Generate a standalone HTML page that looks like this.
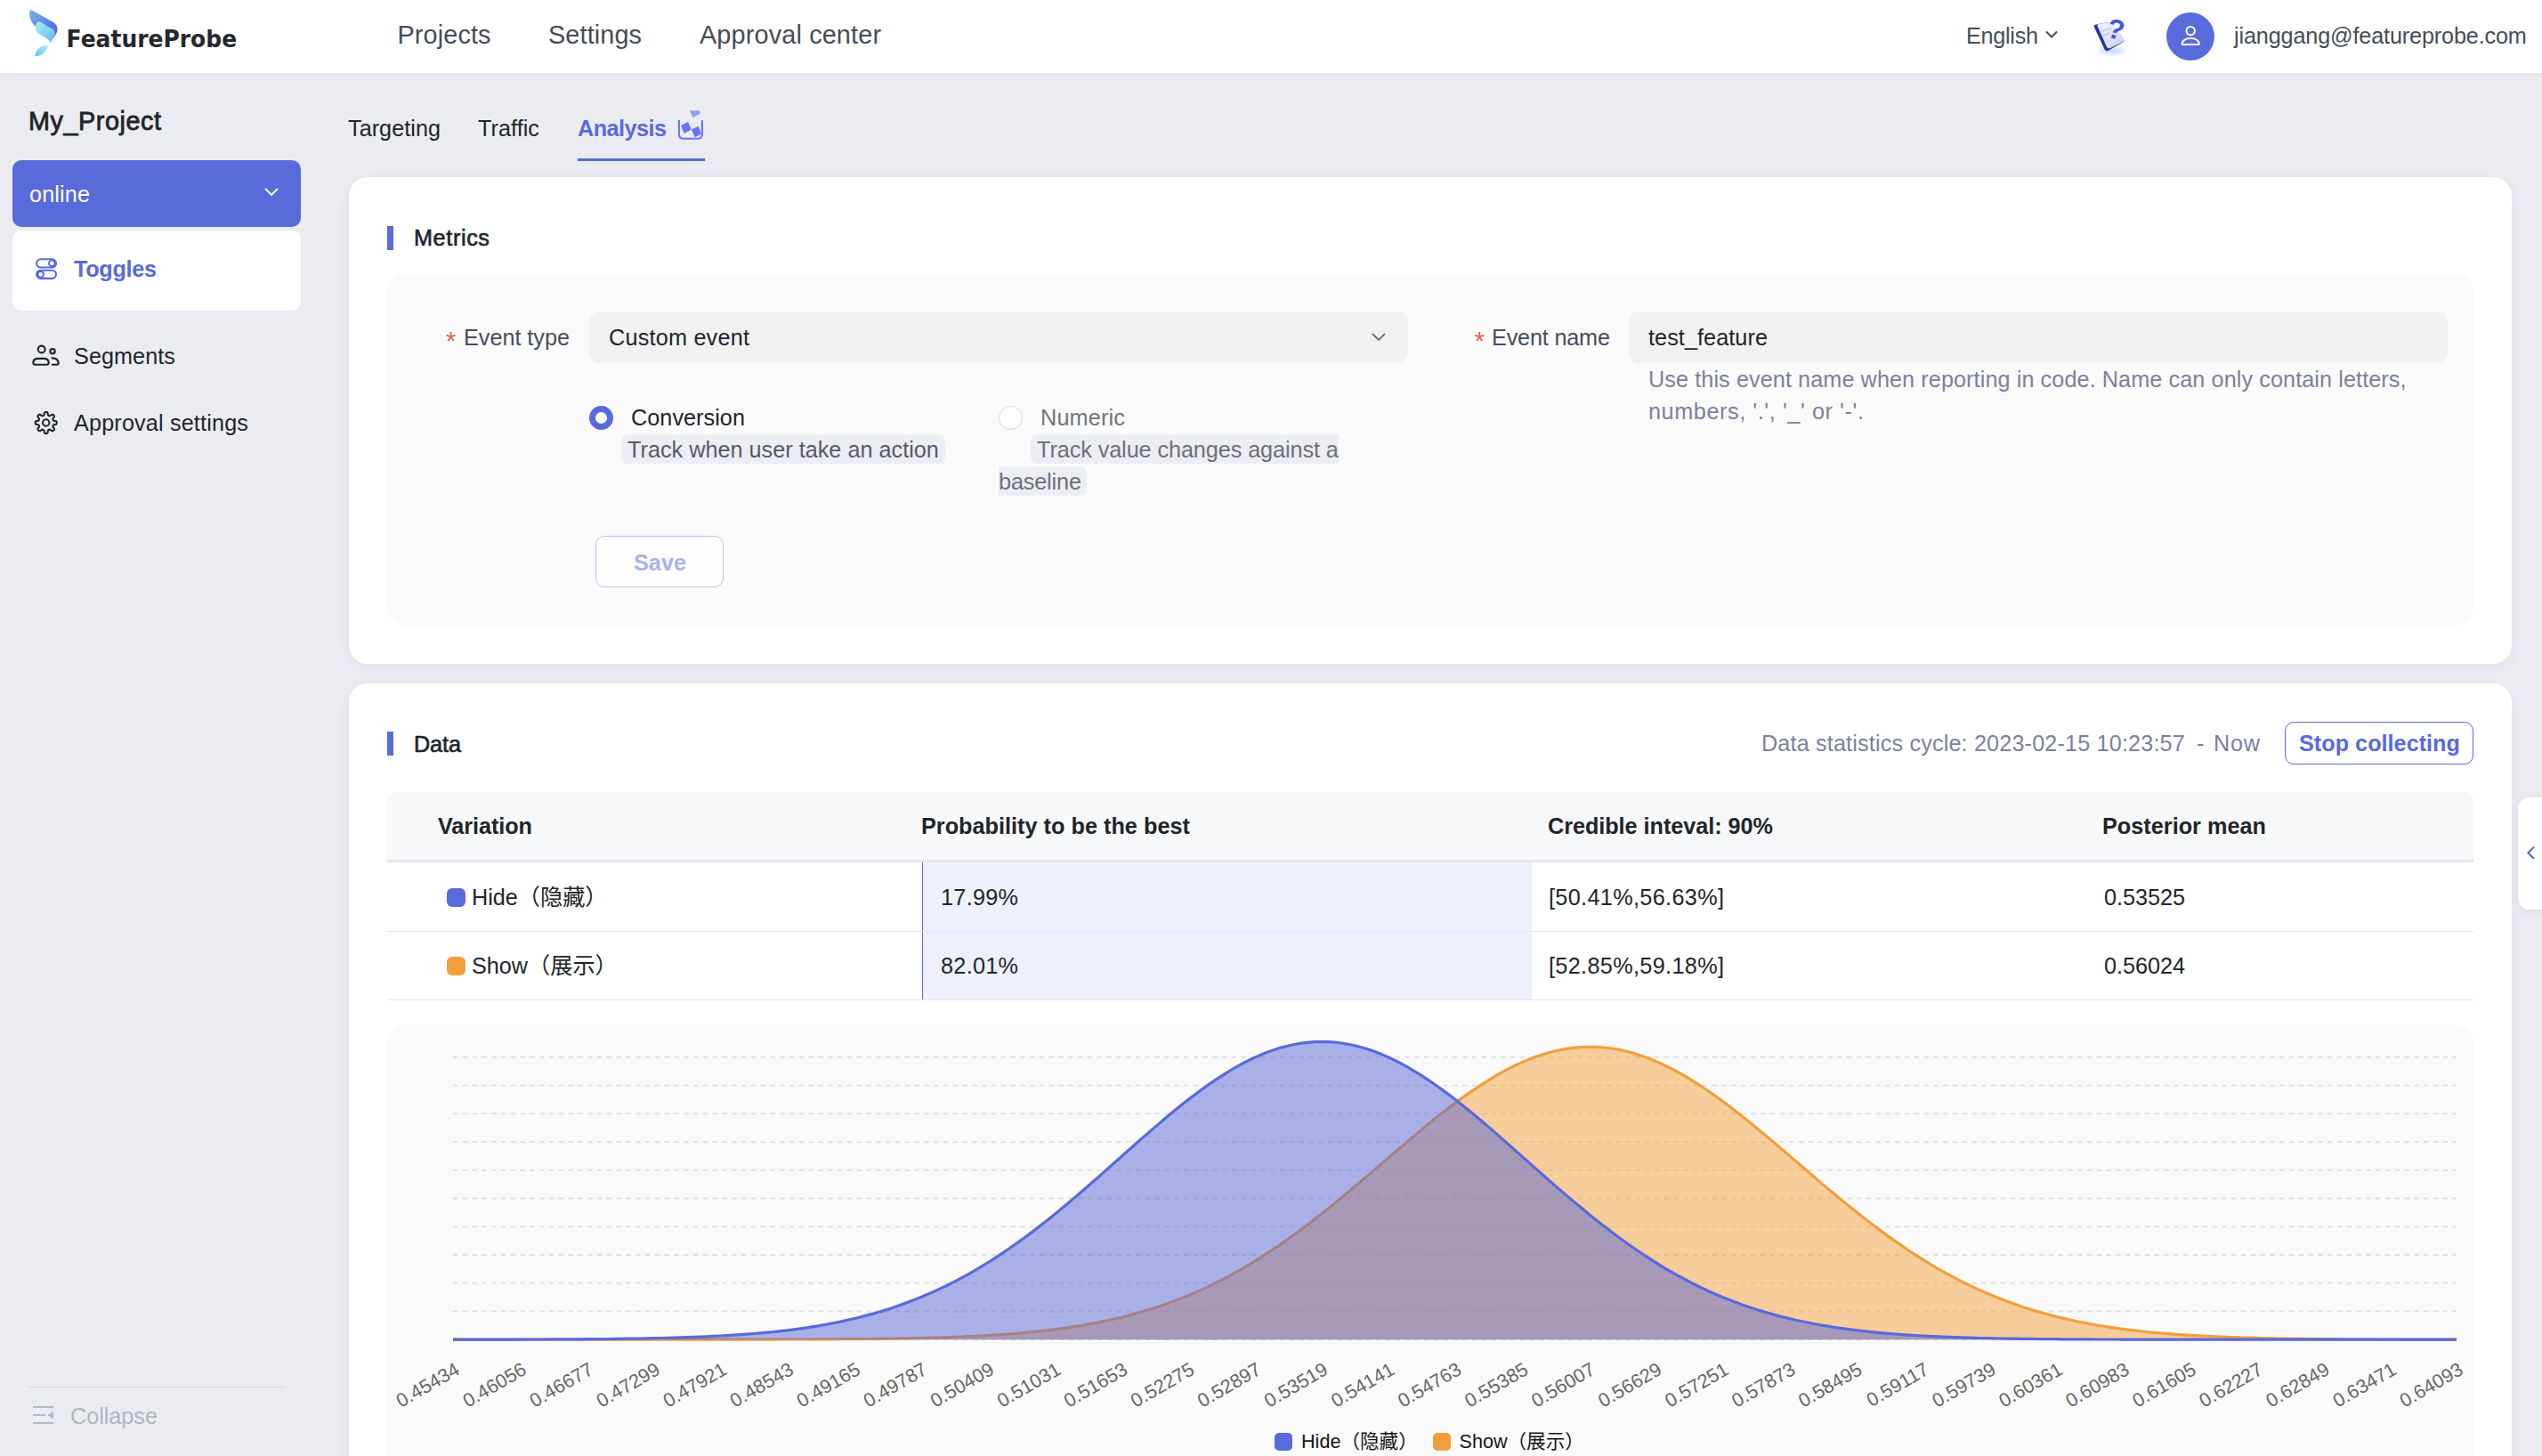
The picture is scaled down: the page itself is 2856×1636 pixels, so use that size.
<!DOCTYPE html>
<html lang="en"><head><meta charset="utf-8"><title>FeatureProbe - Analysis</title>
<style>
html,body{margin:0;padding:0;}
body{width:2856px;height:1636px;overflow:hidden;position:relative;background:#ebecf2;
font-family:"Liberation Sans","Noto Sans CJK SC",sans-serif;-webkit-font-smoothing:antialiased;}
.t{position:absolute;white-space:nowrap;margin:0;}
.b{position:absolute;box-sizing:border-box;}
</style></head><body>
<div class="b" style="left:0px;top:0px;width:2856px;height:82px;background:#fff;border-radius:0px;box-shadow:0 2px 6px rgba(60,70,120,0.04);"></div>
<svg class="b" style="left:30px;top:8px;" width="40" height="58" viewBox="0 0 40 58">
<defs>
<linearGradient id="lg1" x1="0" y1="0" x2="1" y2="1"><stop offset="0" stop-color="#7ab6ee"/><stop offset="1" stop-color="#4b56e0"/></linearGradient>
<linearGradient id="lg2" x1="0" y1="0" x2="1" y2="1"><stop offset="0" stop-color="#a8f0ee"/><stop offset="1" stop-color="#5fb6f5"/></linearGradient>
<linearGradient id="lg3" x1="0" y1="1" x2="1" y2="0"><stop offset="0" stop-color="#5cc4f8"/><stop offset="1" stop-color="#b4ecf6"/></linearGradient>
</defs>
<path d="M3 6 Q3 2 7 4 L30 17 Q36 21 34 28 L31 34 Q22 26 10 22 Q3 16 3 6Z" fill="url(#lg1)"/>
<path d="M11 18 Q13 15 16 17 L30 25 Q33 28 31 33 L27 40 Q24 35 17 32 Q9 28 10 22Z" fill="url(#lg2)"/>
<path d="M9 55 Q11 46 19 43 Q23 42 24 44 Q21 52 15 54 Q11 56 9 55Z" fill="url(#lg3)"/>
</svg>
<svg class="b" style="left:72px;top:26px;" width="200" height="34" viewBox="0 0 200 34"><text x="2.6" y="26.5" font-family="DejaVu Sans, Liberation Sans, sans-serif" font-weight="700" font-size="27.4" fill="#26282d" textLength="191.5" lengthAdjust="spacingAndGlyphs">FeatureProbe</text></svg>
<div class="t " style="left:446.5px;top:18px;line-height:43px;font-size:28.8px;color:#464c56;letter-spacing:0.138px;">Projects</div>
<div class="t " style="left:616px;top:18px;line-height:43px;font-size:28.8px;color:#464c56;letter-spacing:0.134px;">Settings</div>
<div class="t " style="left:786px;top:18px;line-height:43px;font-size:28.8px;color:#464c56;letter-spacing:0.164px;">Approval center</div>
<div class="t " style="left:2209px;top:20.5px;line-height:38px;font-size:25.2px;color:#464c56;letter-spacing:-0.275px;">English</div>
<svg class="b" style="left:2297px;top:33px;" width="16" height="12" viewBox="0 0 16 12"><path d="M2 2.5 L8 8.5 L14 2.5" fill="none" stroke="#474d5a" stroke-width="2"/></svg>
<svg class="b" style="left:2346px;top:18px;" width="48" height="46" viewBox="0 0 48 46">
<defs><linearGradient id="hg" x1="0" y1="0" x2="1" y2="1"><stop offset="0" stop-color="#f4f5fe"/><stop offset="1" stop-color="#c9cff6"/></linearGradient>
<filter id="hb" x="-30%" y="-30%" width="160%" height="160%"><feGaussianBlur stdDeviation="2"/></filter></defs>
<ellipse cx="26" cy="39" rx="15" ry="4" fill="#b9d0fa" opacity="0.7" filter="url(#hb)"/>
<path d="M6.5 11.5 Q7 9.5 9 9.5 L22 7 Q25 6.5 26.5 9 L40 26 Q41.5 28 39 29.5 L22.5 39 Q20 40 18.5 37.5 Z" fill="#2a35a8"/>
<path d="M10.5 11 Q10 9.3 12 9 L23 7 Q25.5 6.6 27 8.8 L40 25.5 Q41.5 27.8 39 29 L25 36 Q22.5 37 21 34.8 Z" fill="url(#hg)"/>
<path d="M14.5 17 L25 14.2 M17 22 L23.5 20.2" stroke="#c5ccf5" stroke-width="1.8" stroke-linecap="round"/>
<text transform="translate(19.4 23) rotate(14)" font-family="Liberation Sans, sans-serif" font-weight="700" font-size="31" fill="#3f57e0">?</text>
</svg>
<div class="b" style="left:2434px;top:14px;width:54px;height:54px;background:#596adb;border-radius:27px;"></div>
<svg class="b" style="left:2447px;top:26px;" width="28" height="28" viewBox="0 0 28 28"><circle cx="14.2" cy="8.6" r="4.7" fill="none" stroke="#fff" stroke-width="2"/><path d="M5 24 Q4.4 24 4.6 22.8 Q6 17 14.2 17 Q22.4 17 23.8 22.8 Q24 24 23.4 24 Z" fill="none" stroke="#fff" stroke-width="2" stroke-linejoin="round"/></svg>
<div class="t " style="left:2510px;top:20.5px;line-height:38px;font-size:25.2px;color:#464c56;letter-spacing:-0.136px;">jianggang@featureprobe.com</div>
<div class="t " style="left:32px;top:114.5px;line-height:43px;font-size:28.8px;color:#212529;letter-spacing:0.551px;-webkit-text-stroke:0.8px #212529;">My_Project</div>
<div class="b" style="left:14px;top:180px;width:324px;height:75px;background:#596adb;border-radius:10px;"></div>
<div class="t " style="left:33px;top:199px;line-height:38px;font-size:25.2px;color:#fff;letter-spacing:0.149px;">online</div>
<svg class="b" style="left:296px;top:209px;" width="18" height="14" viewBox="0 0 18 14"><path d="M2 3 L9 10 L16 3" fill="none" stroke="#fff" stroke-width="1.9"/></svg>
<div class="b" style="left:14px;top:259px;width:324px;height:90px;background:#fff;border-radius:10px;"></div>
<svg class="b" style="left:38px;top:288px;" width="28" height="28" viewBox="0 0 28 28"><g fill="none" stroke="#596adb" stroke-width="2.1">
<rect x="3.1" y="3.3" width="21.9" height="9.2" rx="4.6"/><rect x="3.1" y="15.7" width="21.9" height="9.2" rx="4.6"/>
<circle cx="20.3" cy="7.9" r="3.3" stroke-width="1.9"/><circle cx="7.7" cy="20.3" r="3.3" stroke-width="1.9"/></g></svg>
<div class="t " style="left:83px;top:283px;line-height:38px;font-size:25.2px;color:#596adb;font-weight:700;letter-spacing:-0.288px;">Toggles</div>
<svg class="b" style="left:35px;top:385px;" width="34" height="30" viewBox="0 0 34 30"><g fill="none" stroke="#212529" stroke-width="2.1" stroke-linecap="round" stroke-linejoin="round">
<circle cx="11.7" cy="7.5" r="3.9"/><path d="M2.3 22.5 Q2.3 17.9 8 17.9 H14 Q19.7 17.9 19.7 22.5 Q19.7 24.7 17.5 24.7 H4.5 Q2.3 24.7 2.3 22.5 Z"/>
<circle cx="24" cy="9.7" r="2.7"/><path d="M23.5 17.4 Q30.5 17.6 30.7 22.8 Q30.7 24.7 28.8 24.7 H23.8"/></g></svg>
<div class="t " style="left:83px;top:381px;line-height:38px;font-size:25.2px;color:#212529;letter-spacing:0.077px;">Segments</div>
<svg class="b" style="left:36px;top:461px;" width="32" height="30" viewBox="0 0 32 30"><g fill="none" stroke="#212529" stroke-width="2.1" stroke-linejoin="round">
<path d="M15.70 1.95 L16.17 1.97 L16.64 2.04 L17.09 2.24 L17.48 2.78 L17.71 3.90 L17.86 5.02 L18.08 5.57 L18.36 5.82 L18.66 5.97 L18.97 6.10 L19.28 6.23 L19.61 6.33 L19.98 6.36 L20.53 6.12 L21.42 5.44 L22.38 4.81 L23.03 4.70 L23.49 4.88 L23.87 5.16 L24.22 5.48 L24.54 5.83 L24.82 6.21 L25.00 6.67 L24.89 7.32 L24.26 8.28 L23.58 9.17 L23.34 9.72 L23.37 10.09 L23.47 10.42 L23.60 10.73 L23.73 11.04 L23.88 11.34 L24.13 11.62 L24.68 11.84 L25.80 11.99 L26.92 12.22 L27.46 12.61 L27.66 13.06 L27.73 13.53 L27.75 14.00 L27.73 14.47 L27.66 14.94 L27.46 15.39 L26.92 15.78 L25.80 16.01 L24.68 16.16 L24.13 16.38 L23.88 16.66 L23.73 16.96 L23.60 17.27 L23.47 17.58 L23.37 17.91 L23.34 18.28 L23.58 18.83 L24.26 19.72 L24.89 20.68 L25.00 21.33 L24.82 21.79 L24.54 22.17 L24.22 22.52 L23.87 22.84 L23.49 23.12 L23.03 23.30 L22.38 23.19 L21.42 22.56 L20.53 21.88 L19.98 21.64 L19.61 21.67 L19.28 21.77 L18.97 21.90 L18.66 22.03 L18.36 22.18 L18.08 22.43 L17.86 22.98 L17.71 24.10 L17.48 25.22 L17.09 25.76 L16.64 25.96 L16.17 26.03 L15.70 26.05 L15.23 26.03 L14.76 25.96 L14.31 25.76 L13.92 25.22 L13.69 24.10 L13.54 22.98 L13.32 22.43 L13.04 22.18 L12.74 22.03 L12.43 21.90 L12.12 21.77 L11.79 21.67 L11.42 21.64 L10.87 21.88 L9.98 22.56 L9.02 23.19 L8.37 23.30 L7.91 23.12 L7.53 22.84 L7.18 22.52 L6.86 22.17 L6.58 21.79 L6.40 21.33 L6.51 20.68 L7.14 19.72 L7.82 18.83 L8.06 18.28 L8.03 17.91 L7.93 17.58 L7.80 17.27 L7.67 16.96 L7.52 16.66 L7.27 16.38 L6.72 16.16 L5.60 16.01 L4.48 15.78 L3.94 15.39 L3.74 14.94 L3.67 14.47 L3.65 14.00 L3.67 13.53 L3.74 13.06 L3.94 12.61 L4.48 12.22 L5.60 11.99 L6.72 11.84 L7.27 11.62 L7.52 11.34 L7.67 11.04 L7.80 10.73 L7.93 10.42 L8.03 10.09 L8.06 9.72 L7.82 9.17 L7.14 8.28 L6.51 7.32 L6.40 6.67 L6.58 6.21 L6.86 5.83 L7.18 5.48 L7.53 5.16 L7.91 4.88 L8.37 4.70 L9.02 4.81 L9.98 5.44 L10.87 6.12 L11.42 6.36 L11.79 6.33 L12.12 6.23 L12.43 6.10 L12.74 5.97 L13.04 5.82 L13.32 5.57 L13.54 5.02 L13.69 3.90 L13.92 2.78 L14.31 2.24 L14.76 2.04 L15.23 1.97 Z"/>
<circle cx="15.7" cy="14" r="3.7"/></g></svg>
<div class="t " style="left:83px;top:456px;line-height:38px;font-size:25.2px;color:#212529;letter-spacing:0.168px;">Approval settings</div>
<div class="b" style="left:32px;top:1558px;width:288px;height:1px;background:#d5d8df;border-radius:0px;"></div>
<svg class="b" style="left:36px;top:1578px;" width="26" height="24" viewBox="0 0 26 24"><g fill="none" stroke="#b3babf" stroke-width="2.2"><path d="M1 3 H24 M1 12 H15 M1 21 H24"/></g><path d="M24 7.5 V16.5 L17.5 12 Z" fill="#b3babf"/></svg>
<div class="t " style="left:79px;top:1572px;line-height:38px;font-size:25.2px;color:#afb7bb;letter-spacing:-0.008px;">Collapse</div>
<div class="t " style="left:391px;top:125px;line-height:38px;font-size:25.2px;color:#212529;letter-spacing:0.041px;">Targeting</div>
<div class="t " style="left:537px;top:125px;line-height:38px;font-size:25.2px;color:#212529;letter-spacing:0.065px;">Traffic</div>
<div class="t " style="left:649px;top:125px;line-height:38px;font-size:25.2px;color:#596adb;font-weight:700;letter-spacing:-0.522px;">Analysis</div>
<svg class="b" style="left:760px;top:122px;" width="34" height="36" viewBox="0 0 34 36"><path d="M2.9 13 V28.7 Q2.9 33.7 7.9 33.7 H23.9 Q28.9 33.7 28.9 28.7 V13" fill="none" stroke="#6a73f5" stroke-width="2.1"/>
<path d="M14.9 2.2 L25.6 2.2 L27 5.5 L18.5 9.9 Z" fill="#8f99f8"/>
<path d="M5.1 18.9 L13 15 L16.9 23.6 L8.6 28 Z" fill="#6a73f5"/>
<path d="M16.9 23.6 L24.8 19.7 L27.9 28.4 L20.8 32.3 Z" fill="#6a73f5"/></svg>
<div class="b" style="left:649px;top:178px;width:143px;height:3px;background:#596adb;border-radius:0px;"></div>
<div class="b" style="left:392px;top:199px;width:2430px;height:547px;background:#fff;border-radius:21px;box-shadow:0 4px 16px rgba(60,70,120,0.06);"></div>
<div class="b" style="left:435px;top:254px;width:7px;height:27px;background:#596adb;border-radius:0px;"></div>
<div class="t " style="left:465px;top:248px;line-height:38px;font-size:25.2px;color:#212529;letter-spacing:0.633px;-webkit-text-stroke:0.65px #212529;">Metrics</div>
<div class="b" style="left:435px;top:307px;width:2344px;height:396px;background:#fafafa;border-radius:21px;"></div>
<div class="t " style="left:501px;top:361px;line-height:44px;font-size:29px;color:#e9604f;">*</div>
<div class="t " style="left:521px;top:360px;line-height:38px;font-size:25.2px;color:#474d5a;letter-spacing:-0.008px;">Event type</div>
<div class="b" style="left:662px;top:350px;width:920px;height:58px;background:#f1f1f2;border-radius:12px;"></div>
<div class="t " style="left:684px;top:360px;line-height:38px;font-size:25.2px;color:#212529;letter-spacing:0.230px;">Custom event</div>
<svg class="b" style="left:1539px;top:371px;" width="20" height="16" viewBox="0 0 20 16"><path d="M3 4 L10 11 L17 4" fill="none" stroke="#666c82" stroke-width="1.8"/></svg>
<div class="b" style="left:662px;top:456px;width:27px;height:27px;background:#fff;border-radius:14px;border:7.6px solid #596adb;"></div>
<div class="t " style="left:709px;top:450px;line-height:38px;font-size:25.2px;color:#212529;letter-spacing:0.059px;">Conversion</div>
<div class="b" style="left:698px;top:488px;width:364px;height:33px;background:#ededf4;border-radius:7px;"></div>
<div class="t " style="left:705px;top:486px;line-height:38px;font-size:25.2px;color:#555a66;letter-spacing:0.026px;">Track when user take an action</div>
<div class="b" style="left:1122px;top:456px;width:27px;height:27px;background:#fff;border-radius:14px;border:1px solid #d4d7de;"></div>
<div class="t " style="left:1169px;top:450px;line-height:38px;font-size:25.2px;color:#70757b;letter-spacing:0.198px;">Numeric</div>
<div class="b" style="left:1158px;top:488px;width:346px;height:33px;background:#ededf4;border-radius:7px 0 0 7px;"></div>
<div class="t " style="left:1165px;top:486px;line-height:38px;font-size:25.2px;color:#6c7178;letter-spacing:-0.067px;">Track value changes against a</div>
<div class="b" style="left:1122px;top:524px;width:99px;height:33px;background:#ededf4;border-radius:0 7px 7px 0;"></div>
<div class="t " style="left:1122px;top:522px;line-height:38px;font-size:25.2px;color:#6c7178;letter-spacing:-0.125px;">baseline</div>
<div class="b" style="left:669px;top:602px;width:144px;height:58px;background:#fdfdfd;border-radius:10px;border:1.5px solid #b8bff0;"></div>
<div class="t " style="left:712px;top:612.5px;line-height:38px;font-size:25.2px;color:#a9b1ec;font-weight:700;letter-spacing:0.049px;">Save</div>
<div class="t " style="left:1656.5px;top:361px;line-height:44px;font-size:29px;color:#e9604f;">*</div>
<div class="t " style="left:1676px;top:360px;line-height:38px;font-size:25.2px;color:#474d5a;letter-spacing:-0.164px;">Event name</div>
<div class="b" style="left:1830px;top:350px;width:920px;height:58px;background:#f1f1f2;border-radius:12px;"></div>
<div class="t " style="left:1852px;top:360px;line-height:38px;font-size:25.2px;color:#212529;letter-spacing:0.083px;">test_feature</div>
<div class="t " style="left:1852px;top:407px;line-height:38px;font-size:25.2px;color:#7c8199;letter-spacing:0.100px;">Use this event name when reporting in code. Name can only contain letters,</div>
<div class="t " style="left:1852px;top:443px;line-height:38px;font-size:25.2px;color:#7c8199;letter-spacing:0.594px;">numbers, '.', '_' or '-'.</div>
<div class="b" style="left:392px;top:768px;width:2430px;height:932px;background:#fff;border-radius:21px;box-shadow:0 4px 16px rgba(60,70,120,0.06);"></div>
<div class="b" style="left:435px;top:822px;width:7px;height:27px;background:#596adb;border-radius:0px;"></div>
<div class="t " style="left:465px;top:817px;line-height:38px;font-size:25.2px;color:#212529;letter-spacing:-0.077px;-webkit-text-stroke:0.65px #212529;">Data</div>
<div class="t " style="left:1979px;top:816px;line-height:38px;font-size:25.2px;color:#7c8199;letter-spacing:0.164px;">Data statistics cycle: 2023-02-15 10:23:57</div>
<div class="t " style="left:2468px;top:816px;line-height:38px;font-size:25.2px;color:#7c8199;">-</div>
<div class="t " style="left:2487px;top:816px;line-height:38px;font-size:25.2px;color:#7c8199;letter-spacing:0.794px;">Now</div>
<div class="b" style="left:2567px;top:811px;width:212px;height:48px;background:#fff;border-radius:10px;border:1.5px solid #596adb;"></div>
<div class="t " style="left:2583px;top:816px;line-height:38px;font-size:25.2px;color:#596adb;font-weight:700;letter-spacing:0.028px;">Stop collecting</div>
<div class="b" style="left:435px;top:890px;width:2344px;height:76px;background:#f7f8fa;border-radius:10px 10px 0 0;"></div>
<div class="b" style="left:435px;top:966px;width:2344px;height:3px;background:#e4e6ea;border-radius:0px;"></div>
<div class="t " style="left:492px;top:909px;line-height:38px;font-size:25.2px;color:#212529;font-weight:700;letter-spacing:-0.054px;">Variation</div>
<div class="t " style="left:1035px;top:909px;line-height:38px;font-size:25.2px;color:#212529;font-weight:700;letter-spacing:0.039px;">Probability to be the best</div>
<div class="t " style="left:1739px;top:909px;line-height:38px;font-size:25.2px;color:#212529;font-weight:700;letter-spacing:-0.025px;">Credible inteval: 90%</div>
<div class="t " style="left:2362px;top:909px;line-height:38px;font-size:25.2px;color:#212529;font-weight:700;letter-spacing:0.041px;">Posterior mean</div>
<div class="b" style="left:1036px;top:969px;width:685px;height:154px;background:#eef0fd;border-radius:0px;border-left:1.5px solid #596adb;"></div>
<div class="b" style="left:435px;top:1046px;width:2344px;height:1px;background:#e5e6ea;border-radius:0px;"></div>
<div class="b" style="left:435px;top:1123px;width:2344px;height:1px;background:#e5e6ea;border-radius:0px;"></div>
<div class="b" style="left:502px;top:997.5px;width:21px;height:21.5px;background:#596adb;border-radius:6px;"></div>
<div class="t " style="left:530px;top:989px;line-height:38px;font-size:25.2px;color:#212529;">Hide（隐藏）</div>
<div class="t " style="left:1057px;top:989px;line-height:38px;font-size:25.2px;color:#212529;letter-spacing:0.306px;">17.99%</div>
<div class="t " style="left:1740px;top:989px;line-height:38px;font-size:25.2px;color:#212529;letter-spacing:0.361px;">[50.41%,56.63%]</div>
<div class="t " style="left:2364px;top:989px;line-height:38px;font-size:25.2px;color:#212529;letter-spacing:-0.015px;">0.53525</div>
<div class="b" style="left:502px;top:1074.5px;width:21px;height:21.5px;background:#f19f3c;border-radius:6px;"></div>
<div class="t " style="left:530px;top:1066px;line-height:38px;font-size:25.2px;color:#212529;">Show（展示）</div>
<div class="t " style="left:1057px;top:1066px;line-height:38px;font-size:25.2px;color:#212529;letter-spacing:0.306px;">82.01%</div>
<div class="t " style="left:1740px;top:1066px;line-height:38px;font-size:25.2px;color:#212529;letter-spacing:0.361px;">[52.85%,59.18%]</div>
<div class="t " style="left:2364px;top:1066px;line-height:38px;font-size:25.2px;color:#212529;letter-spacing:-0.015px;">0.56024</div>
<div class="b" style="left:435px;top:1151px;width:2344px;height:549px;background:#fafafa;border-radius:21px;"></div>
<svg class="b" style="left:0;top:0" width="2856" height="1636" viewBox="0 0 2856 1636" font-family="Liberation Sans, sans-serif"><line x1="509" y1="1505.2" x2="2760" y2="1505.2" stroke="#dfdfdf" stroke-width="1.8" stroke-dasharray="5.4 5.4"/><line x1="509" y1="1473.5" x2="2760" y2="1473.5" stroke="#dfdfdf" stroke-width="1.8" stroke-dasharray="5.4 5.4"/><line x1="509" y1="1441.7" x2="2760" y2="1441.7" stroke="#dfdfdf" stroke-width="1.8" stroke-dasharray="5.4 5.4"/><line x1="509" y1="1410.0" x2="2760" y2="1410.0" stroke="#dfdfdf" stroke-width="1.8" stroke-dasharray="5.4 5.4"/><line x1="509" y1="1378.3" x2="2760" y2="1378.3" stroke="#dfdfdf" stroke-width="1.8" stroke-dasharray="5.4 5.4"/><line x1="509" y1="1346.5" x2="2760" y2="1346.5" stroke="#dfdfdf" stroke-width="1.8" stroke-dasharray="5.4 5.4"/><line x1="509" y1="1314.8" x2="2760" y2="1314.8" stroke="#dfdfdf" stroke-width="1.8" stroke-dasharray="5.4 5.4"/><line x1="509" y1="1283.1" x2="2760" y2="1283.1" stroke="#dfdfdf" stroke-width="1.8" stroke-dasharray="5.4 5.4"/><line x1="509" y1="1251.4" x2="2760" y2="1251.4" stroke="#dfdfdf" stroke-width="1.8" stroke-dasharray="5.4 5.4"/><line x1="509" y1="1219.6" x2="2760" y2="1219.6" stroke="#dfdfdf" stroke-width="1.8" stroke-dasharray="5.4 5.4"/><line x1="509" y1="1187.9" x2="2760" y2="1187.9" stroke="#dfdfdf" stroke-width="1.8" stroke-dasharray="5.4 5.4"/><path d="M509.0 1505.2 L516.5 1505.2 L524.0 1505.2 L531.5 1505.2 L539.0 1505.2 L546.5 1505.2 L554.0 1505.2 L561.5 1505.2 L569.0 1505.2 L576.5 1505.2 L584.0 1505.2 L591.5 1505.2 L599.0 1505.2 L606.5 1505.2 L614.0 1505.2 L621.5 1505.2 L629.1 1505.2 L636.6 1505.2 L644.1 1505.2 L651.6 1505.2 L659.1 1505.2 L666.6 1505.2 L674.1 1505.2 L681.6 1505.2 L689.1 1505.2 L696.6 1505.2 L704.1 1505.2 L711.6 1505.2 L719.1 1505.2 L726.6 1505.2 L734.1 1505.2 L741.6 1505.2 L749.1 1505.2 L756.6 1505.2 L764.1 1505.2 L771.6 1505.2 L779.1 1505.2 L786.6 1505.2 L794.1 1505.2 L801.6 1505.2 L809.1 1505.2 L816.6 1505.1 L824.1 1505.1 L831.6 1505.1 L839.1 1505.1 L846.7 1505.1 L854.2 1505.1 L861.7 1505.1 L869.2 1505.1 L876.7 1505.0 L884.2 1505.0 L891.7 1505.0 L899.2 1505.0 L906.7 1505.0 L914.2 1504.9 L921.7 1504.9 L929.2 1504.8 L936.7 1504.8 L944.2 1504.7 L951.7 1504.7 L959.2 1504.6 L966.7 1504.6 L974.2 1504.5 L981.7 1504.4 L989.2 1504.3 L996.7 1504.2 L1004.2 1504.1 L1011.7 1503.9 L1019.2 1503.8 L1026.7 1503.7 L1034.2 1503.5 L1041.7 1503.3 L1049.2 1503.1 L1056.7 1502.9 L1064.2 1502.6 L1071.8 1502.3 L1079.3 1502.0 L1086.8 1501.7 L1094.3 1501.4 L1101.8 1501.0 L1109.3 1500.5 L1116.8 1500.1 L1124.3 1499.6 L1131.8 1499.0 L1139.3 1498.5 L1146.8 1497.8 L1154.3 1497.1 L1161.8 1496.4 L1169.3 1495.6 L1176.8 1494.8 L1184.3 1493.8 L1191.8 1492.9 L1199.3 1491.8 L1206.8 1490.7 L1214.3 1489.5 L1221.8 1488.2 L1229.3 1486.8 L1236.8 1485.3 L1244.3 1483.7 L1251.8 1482.0 L1259.3 1480.3 L1266.8 1478.4 L1274.3 1476.4 L1281.8 1474.3 L1289.3 1472.0 L1296.8 1469.7 L1304.4 1467.2 L1311.9 1464.6 L1319.4 1461.8 L1326.9 1458.9 L1334.4 1455.9 L1341.9 1452.7 L1349.4 1449.4 L1356.9 1445.9 L1364.4 1442.3 L1371.9 1438.5 L1379.4 1434.6 L1386.9 1430.5 L1394.4 1426.3 L1401.9 1421.9 L1409.4 1417.3 L1416.9 1412.7 L1424.4 1407.8 L1431.9 1402.8 L1439.4 1397.7 L1446.9 1392.4 L1454.4 1387.0 L1461.9 1381.5 L1469.4 1375.9 L1476.9 1370.1 L1484.4 1364.2 L1491.9 1358.2 L1499.4 1352.1 L1506.9 1346.0 L1514.4 1339.7 L1521.9 1333.4 L1529.5 1327.1 L1537.0 1320.7 L1544.5 1314.3 L1552.0 1307.8 L1559.5 1301.4 L1567.0 1294.9 L1574.5 1288.5 L1582.0 1282.1 L1589.5 1275.8 L1597.0 1269.5 L1604.5 1263.4 L1612.0 1257.3 L1619.5 1251.3 L1627.0 1245.5 L1634.5 1239.8 L1642.0 1234.2 L1649.5 1228.9 L1657.0 1223.7 L1664.5 1218.7 L1672.0 1214.0 L1679.5 1209.4 L1687.0 1205.1 L1694.5 1201.1 L1702.0 1197.3 L1709.5 1193.9 L1717.0 1190.7 L1724.5 1187.8 L1732.0 1185.2 L1739.5 1182.9 L1747.0 1181.0 L1754.6 1179.4 L1762.1 1178.1 L1769.6 1177.1 L1777.1 1176.5 L1784.6 1176.3 L1792.1 1176.3 L1799.6 1176.8 L1807.1 1177.5 L1814.6 1178.6 L1822.1 1180.1 L1829.6 1181.8 L1837.1 1183.9 L1844.6 1186.4 L1852.1 1189.1 L1859.6 1192.1 L1867.1 1195.5 L1874.6 1199.1 L1882.1 1203.0 L1889.6 1207.1 L1897.1 1211.5 L1904.6 1216.2 L1912.1 1221.0 L1919.6 1226.1 L1927.1 1231.4 L1934.6 1236.8 L1942.1 1242.4 L1949.6 1248.2 L1957.1 1254.1 L1964.6 1260.1 L1972.1 1266.2 L1979.7 1272.5 L1987.2 1278.8 L1994.7 1285.1 L2002.2 1291.5 L2009.7 1297.9 L2017.2 1304.4 L2024.7 1310.8 L2032.2 1317.3 L2039.7 1323.7 L2047.2 1330.1 L2054.7 1336.4 L2062.2 1342.7 L2069.7 1348.9 L2077.2 1355.0 L2084.7 1361.0 L2092.2 1367.0 L2099.7 1372.8 L2107.2 1378.5 L2114.7 1384.1 L2122.2 1389.6 L2129.7 1394.9 L2137.2 1400.1 L2144.7 1405.2 L2152.2 1410.1 L2159.7 1414.9 L2167.2 1419.5 L2174.7 1424.0 L2182.2 1428.3 L2189.7 1432.4 L2197.3 1436.4 L2204.8 1440.3 L2212.3 1444.0 L2219.8 1447.6 L2227.3 1451.0 L2234.8 1454.2 L2242.3 1457.3 L2249.8 1460.3 L2257.3 1463.1 L2264.8 1465.8 L2272.3 1468.4 L2279.8 1470.8 L2287.3 1473.1 L2294.8 1475.3 L2302.3 1477.3 L2309.8 1479.3 L2317.3 1481.1 L2324.8 1482.8 L2332.3 1484.5 L2339.8 1486.0 L2347.3 1487.4 L2354.8 1488.8 L2362.3 1490.0 L2369.8 1491.2 L2377.3 1492.3 L2384.8 1493.3 L2392.3 1494.3 L2399.8 1495.2 L2407.3 1496.0 L2414.8 1496.8 L2422.4 1497.5 L2429.9 1498.1 L2437.4 1498.7 L2444.9 1499.3 L2452.4 1499.8 L2459.9 1500.3 L2467.4 1500.7 L2474.9 1501.1 L2482.4 1501.5 L2489.9 1501.9 L2497.4 1502.2 L2504.9 1502.5 L2512.4 1502.7 L2519.9 1503.0 L2527.4 1503.2 L2534.9 1503.4 L2542.4 1503.6 L2549.9 1503.7 L2557.4 1503.9 L2564.9 1504.0 L2572.4 1504.1 L2579.9 1504.2 L2587.4 1504.3 L2594.9 1504.4 L2602.4 1504.5 L2609.9 1504.6 L2617.4 1504.7 L2624.9 1504.7 L2632.4 1504.8 L2639.9 1504.8 L2647.5 1504.9 L2655.0 1504.9 L2662.5 1504.9 L2670.0 1505.0 L2677.5 1505.0 L2685.0 1505.0 L2692.5 1505.0 L2700.0 1505.1 L2707.5 1505.1 L2715.0 1505.1 L2722.5 1505.1 L2730.0 1505.1 L2737.5 1505.1 L2745.0 1505.1 L2752.5 1505.1 L2760.0 1505.2 L2760 1505.2 L509 1505.2 Z" fill="rgba(241,159,60,0.5)"/><path d="M509.0 1505.2 L516.5 1505.2 L524.0 1505.2 L531.5 1505.2 L539.0 1505.2 L546.5 1505.2 L554.0 1505.2 L561.5 1505.2 L569.0 1505.2 L576.5 1505.2 L584.0 1505.2 L591.5 1505.2 L599.0 1505.2 L606.5 1505.2 L614.0 1505.2 L621.5 1505.2 L629.1 1505.2 L636.6 1505.2 L644.1 1505.2 L651.6 1505.2 L659.1 1505.2 L666.6 1505.2 L674.1 1505.2 L681.6 1505.2 L689.1 1505.2 L696.6 1505.2 L704.1 1505.2 L711.6 1505.2 L719.1 1505.2 L726.6 1505.2 L734.1 1505.2 L741.6 1505.2 L749.1 1505.2 L756.6 1505.2 L764.1 1505.2 L771.6 1505.2 L779.1 1505.2 L786.6 1505.2 L794.1 1505.2 L801.6 1505.2 L809.1 1505.2 L816.6 1505.1 L824.1 1505.1 L831.6 1505.1 L839.1 1505.1 L846.7 1505.1 L854.2 1505.1 L861.7 1505.1 L869.2 1505.1 L876.7 1505.0 L884.2 1505.0 L891.7 1505.0 L899.2 1505.0 L906.7 1505.0 L914.2 1504.9 L921.7 1504.9 L929.2 1504.8 L936.7 1504.8 L944.2 1504.7 L951.7 1504.7 L959.2 1504.6 L966.7 1504.6 L974.2 1504.5 L981.7 1504.4 L989.2 1504.3 L996.7 1504.2 L1004.2 1504.1 L1011.7 1503.9 L1019.2 1503.8 L1026.7 1503.7 L1034.2 1503.5 L1041.7 1503.3 L1049.2 1503.1 L1056.7 1502.9 L1064.2 1502.6 L1071.8 1502.3 L1079.3 1502.0 L1086.8 1501.7 L1094.3 1501.4 L1101.8 1501.0 L1109.3 1500.5 L1116.8 1500.1 L1124.3 1499.6 L1131.8 1499.0 L1139.3 1498.5 L1146.8 1497.8 L1154.3 1497.1 L1161.8 1496.4 L1169.3 1495.6 L1176.8 1494.8 L1184.3 1493.8 L1191.8 1492.9 L1199.3 1491.8 L1206.8 1490.7 L1214.3 1489.5 L1221.8 1488.2 L1229.3 1486.8 L1236.8 1485.3 L1244.3 1483.7 L1251.8 1482.0 L1259.3 1480.3 L1266.8 1478.4 L1274.3 1476.4 L1281.8 1474.3 L1289.3 1472.0 L1296.8 1469.7 L1304.4 1467.2 L1311.9 1464.6 L1319.4 1461.8 L1326.9 1458.9 L1334.4 1455.9 L1341.9 1452.7 L1349.4 1449.4 L1356.9 1445.9 L1364.4 1442.3 L1371.9 1438.5 L1379.4 1434.6 L1386.9 1430.5 L1394.4 1426.3 L1401.9 1421.9 L1409.4 1417.3 L1416.9 1412.7 L1424.4 1407.8 L1431.9 1402.8 L1439.4 1397.7 L1446.9 1392.4 L1454.4 1387.0 L1461.9 1381.5 L1469.4 1375.9 L1476.9 1370.1 L1484.4 1364.2 L1491.9 1358.2 L1499.4 1352.1 L1506.9 1346.0 L1514.4 1339.7 L1521.9 1333.4 L1529.5 1327.1 L1537.0 1320.7 L1544.5 1314.3 L1552.0 1307.8 L1559.5 1301.4 L1567.0 1294.9 L1574.5 1288.5 L1582.0 1282.1 L1589.5 1275.8 L1597.0 1269.5 L1604.5 1263.4 L1612.0 1257.3 L1619.5 1251.3 L1627.0 1245.5 L1634.5 1239.8 L1642.0 1234.2 L1649.5 1228.9 L1657.0 1223.7 L1664.5 1218.7 L1672.0 1214.0 L1679.5 1209.4 L1687.0 1205.1 L1694.5 1201.1 L1702.0 1197.3 L1709.5 1193.9 L1717.0 1190.7 L1724.5 1187.8 L1732.0 1185.2 L1739.5 1182.9 L1747.0 1181.0 L1754.6 1179.4 L1762.1 1178.1 L1769.6 1177.1 L1777.1 1176.5 L1784.6 1176.3 L1792.1 1176.3 L1799.6 1176.8 L1807.1 1177.5 L1814.6 1178.6 L1822.1 1180.1 L1829.6 1181.8 L1837.1 1183.9 L1844.6 1186.4 L1852.1 1189.1 L1859.6 1192.1 L1867.1 1195.5 L1874.6 1199.1 L1882.1 1203.0 L1889.6 1207.1 L1897.1 1211.5 L1904.6 1216.2 L1912.1 1221.0 L1919.6 1226.1 L1927.1 1231.4 L1934.6 1236.8 L1942.1 1242.4 L1949.6 1248.2 L1957.1 1254.1 L1964.6 1260.1 L1972.1 1266.2 L1979.7 1272.5 L1987.2 1278.8 L1994.7 1285.1 L2002.2 1291.5 L2009.7 1297.9 L2017.2 1304.4 L2024.7 1310.8 L2032.2 1317.3 L2039.7 1323.7 L2047.2 1330.1 L2054.7 1336.4 L2062.2 1342.7 L2069.7 1348.9 L2077.2 1355.0 L2084.7 1361.0 L2092.2 1367.0 L2099.7 1372.8 L2107.2 1378.5 L2114.7 1384.1 L2122.2 1389.6 L2129.7 1394.9 L2137.2 1400.1 L2144.7 1405.2 L2152.2 1410.1 L2159.7 1414.9 L2167.2 1419.5 L2174.7 1424.0 L2182.2 1428.3 L2189.7 1432.4 L2197.3 1436.4 L2204.8 1440.3 L2212.3 1444.0 L2219.8 1447.6 L2227.3 1451.0 L2234.8 1454.2 L2242.3 1457.3 L2249.8 1460.3 L2257.3 1463.1 L2264.8 1465.8 L2272.3 1468.4 L2279.8 1470.8 L2287.3 1473.1 L2294.8 1475.3 L2302.3 1477.3 L2309.8 1479.3 L2317.3 1481.1 L2324.8 1482.8 L2332.3 1484.5 L2339.8 1486.0 L2347.3 1487.4 L2354.8 1488.8 L2362.3 1490.0 L2369.8 1491.2 L2377.3 1492.3 L2384.8 1493.3 L2392.3 1494.3 L2399.8 1495.2 L2407.3 1496.0 L2414.8 1496.8 L2422.4 1497.5 L2429.9 1498.1 L2437.4 1498.7 L2444.9 1499.3 L2452.4 1499.8 L2459.9 1500.3 L2467.4 1500.7 L2474.9 1501.1 L2482.4 1501.5 L2489.9 1501.9 L2497.4 1502.2 L2504.9 1502.5 L2512.4 1502.7 L2519.9 1503.0 L2527.4 1503.2 L2534.9 1503.4 L2542.4 1503.6 L2549.9 1503.7 L2557.4 1503.9 L2564.9 1504.0 L2572.4 1504.1 L2579.9 1504.2 L2587.4 1504.3 L2594.9 1504.4 L2602.4 1504.5 L2609.9 1504.6 L2617.4 1504.7 L2624.9 1504.7 L2632.4 1504.8 L2639.9 1504.8 L2647.5 1504.9 L2655.0 1504.9 L2662.5 1504.9 L2670.0 1505.0 L2677.5 1505.0 L2685.0 1505.0 L2692.5 1505.0 L2700.0 1505.1 L2707.5 1505.1 L2715.0 1505.1 L2722.5 1505.1 L2730.0 1505.1 L2737.5 1505.1 L2745.0 1505.1 L2752.5 1505.1 L2760.0 1505.2" fill="none" stroke="#f19f3c" stroke-width="3.2" stroke-linejoin="round"/><path d="M509.0 1505.2 L516.5 1505.2 L524.0 1505.2 L531.5 1505.1 L539.0 1505.1 L546.5 1505.1 L554.0 1505.1 L561.5 1505.1 L569.0 1505.1 L576.5 1505.1 L584.0 1505.1 L591.5 1505.0 L599.0 1505.0 L606.5 1505.0 L614.0 1505.0 L621.5 1504.9 L629.1 1504.9 L636.6 1504.9 L644.1 1504.8 L651.6 1504.8 L659.1 1504.7 L666.6 1504.7 L674.1 1504.6 L681.6 1504.5 L689.1 1504.4 L696.6 1504.3 L704.1 1504.2 L711.6 1504.1 L719.1 1504.0 L726.6 1503.9 L734.1 1503.7 L741.6 1503.5 L749.1 1503.4 L756.6 1503.2 L764.1 1502.9 L771.6 1502.7 L779.1 1502.4 L786.6 1502.1 L794.1 1501.8 L801.6 1501.4 L809.1 1501.0 L816.6 1500.6 L824.1 1500.2 L831.6 1499.7 L839.1 1499.1 L846.7 1498.5 L854.2 1497.9 L861.7 1497.2 L869.2 1496.5 L876.7 1495.6 L884.2 1494.8 L891.7 1493.8 L899.2 1492.8 L906.7 1491.8 L914.2 1490.6 L921.7 1489.3 L929.2 1488.0 L936.7 1486.6 L944.2 1485.1 L951.7 1483.4 L959.2 1481.7 L966.7 1479.9 L974.2 1477.9 L981.7 1475.9 L989.2 1473.7 L996.7 1471.4 L1004.2 1468.9 L1011.7 1466.3 L1019.2 1463.6 L1026.7 1460.7 L1034.2 1457.7 L1041.7 1454.6 L1049.2 1451.2 L1056.7 1447.8 L1064.2 1444.2 L1071.8 1440.4 L1079.3 1436.4 L1086.8 1432.3 L1094.3 1428.1 L1101.8 1423.6 L1109.3 1419.0 L1116.8 1414.3 L1124.3 1409.4 L1131.8 1404.3 L1139.3 1399.1 L1146.8 1393.7 L1154.3 1388.2 L1161.8 1382.6 L1169.3 1376.8 L1176.8 1370.9 L1184.3 1364.9 L1191.8 1358.7 L1199.3 1352.5 L1206.8 1346.1 L1214.3 1339.7 L1221.8 1333.2 L1229.3 1326.7 L1236.8 1320.1 L1244.3 1313.4 L1251.8 1306.8 L1259.3 1300.1 L1266.8 1293.4 L1274.3 1286.8 L1281.8 1280.1 L1289.3 1273.6 L1296.8 1267.1 L1304.4 1260.7 L1311.9 1254.3 L1319.4 1248.1 L1326.9 1242.1 L1334.4 1236.1 L1341.9 1230.4 L1349.4 1224.8 L1356.9 1219.4 L1364.4 1214.2 L1371.9 1209.3 L1379.4 1204.6 L1386.9 1200.1 L1394.4 1195.9 L1401.9 1192.0 L1409.4 1188.4 L1416.9 1185.1 L1424.4 1182.1 L1431.9 1179.5 L1439.4 1177.1 L1446.9 1175.2 L1454.4 1173.5 L1461.9 1172.2 L1469.4 1171.3 L1476.9 1170.7 L1484.4 1170.5 L1491.9 1170.6 L1499.4 1171.2 L1506.9 1172.0 L1514.4 1173.3 L1521.9 1174.8 L1529.5 1176.8 L1537.0 1179.0 L1544.5 1181.6 L1552.0 1184.6 L1559.5 1187.8 L1567.0 1191.4 L1574.5 1195.2 L1582.0 1199.4 L1589.5 1203.8 L1597.0 1208.4 L1604.5 1213.3 L1612.0 1218.5 L1619.5 1223.8 L1627.0 1229.4 L1634.5 1235.1 L1642.0 1241.0 L1649.5 1247.1 L1657.0 1253.2 L1664.5 1259.5 L1672.0 1265.9 L1679.5 1272.4 L1687.0 1279.0 L1694.5 1285.6 L1702.0 1292.2 L1709.5 1298.9 L1717.0 1305.6 L1724.5 1312.3 L1732.0 1318.9 L1739.5 1325.5 L1747.0 1332.1 L1754.6 1338.6 L1762.1 1345.0 L1769.6 1351.4 L1777.1 1357.6 L1784.6 1363.8 L1792.1 1369.9 L1799.6 1375.8 L1807.1 1381.6 L1814.6 1387.3 L1822.1 1392.8 L1829.6 1398.2 L1837.1 1403.4 L1844.6 1408.5 L1852.1 1413.4 L1859.6 1418.2 L1867.1 1422.8 L1874.6 1427.3 L1882.1 1431.6 L1889.6 1435.7 L1897.1 1439.7 L1904.6 1443.5 L1912.1 1447.2 L1919.6 1450.7 L1927.1 1454.0 L1934.6 1457.2 L1942.1 1460.2 L1949.6 1463.1 L1957.1 1465.9 L1964.6 1468.5 L1972.1 1470.9 L1979.7 1473.3 L1987.2 1475.5 L1994.7 1477.6 L2002.2 1479.6 L2009.7 1481.4 L2017.2 1483.2 L2024.7 1484.8 L2032.2 1486.3 L2039.7 1487.8 L2047.2 1489.1 L2054.7 1490.4 L2062.2 1491.6 L2069.7 1492.6 L2077.2 1493.7 L2084.7 1494.6 L2092.2 1495.5 L2099.7 1496.3 L2107.2 1497.1 L2114.7 1497.8 L2122.2 1498.4 L2129.7 1499.0 L2137.2 1499.6 L2144.7 1500.1 L2152.2 1500.5 L2159.7 1501.0 L2167.2 1501.4 L2174.7 1501.7 L2182.2 1502.1 L2189.7 1502.4 L2197.3 1502.6 L2204.8 1502.9 L2212.3 1503.1 L2219.8 1503.3 L2227.3 1503.5 L2234.8 1503.7 L2242.3 1503.8 L2249.8 1504.0 L2257.3 1504.1 L2264.8 1504.2 L2272.3 1504.3 L2279.8 1504.4 L2287.3 1504.5 L2294.8 1504.6 L2302.3 1504.7 L2309.8 1504.7 L2317.3 1504.8 L2324.8 1504.8 L2332.3 1504.9 L2339.8 1504.9 L2347.3 1504.9 L2354.8 1505.0 L2362.3 1505.0 L2369.8 1505.0 L2377.3 1505.0 L2384.8 1505.1 L2392.3 1505.1 L2399.8 1505.1 L2407.3 1505.1 L2414.8 1505.1 L2422.4 1505.1 L2429.9 1505.1 L2437.4 1505.1 L2444.9 1505.2 L2452.4 1505.2 L2459.9 1505.2 L2467.4 1505.2 L2474.9 1505.2 L2482.4 1505.2 L2489.9 1505.2 L2497.4 1505.2 L2504.9 1505.2 L2512.4 1505.2 L2519.9 1505.2 L2527.4 1505.2 L2534.9 1505.2 L2542.4 1505.2 L2549.9 1505.2 L2557.4 1505.2 L2564.9 1505.2 L2572.4 1505.2 L2579.9 1505.2 L2587.4 1505.2 L2594.9 1505.2 L2602.4 1505.2 L2609.9 1505.2 L2617.4 1505.2 L2624.9 1505.2 L2632.4 1505.2 L2639.9 1505.2 L2647.5 1505.2 L2655.0 1505.2 L2662.5 1505.2 L2670.0 1505.2 L2677.5 1505.2 L2685.0 1505.2 L2692.5 1505.2 L2700.0 1505.2 L2707.5 1505.2 L2715.0 1505.2 L2722.5 1505.2 L2730.0 1505.2 L2737.5 1505.2 L2745.0 1505.2 L2752.5 1505.2 L2760.0 1505.2 L2760 1505.2 L509 1505.2 Z" fill="rgba(88,102,214,0.5)"/><path d="M509.0 1505.2 L516.5 1505.2 L524.0 1505.2 L531.5 1505.1 L539.0 1505.1 L546.5 1505.1 L554.0 1505.1 L561.5 1505.1 L569.0 1505.1 L576.5 1505.1 L584.0 1505.1 L591.5 1505.0 L599.0 1505.0 L606.5 1505.0 L614.0 1505.0 L621.5 1504.9 L629.1 1504.9 L636.6 1504.9 L644.1 1504.8 L651.6 1504.8 L659.1 1504.7 L666.6 1504.7 L674.1 1504.6 L681.6 1504.5 L689.1 1504.4 L696.6 1504.3 L704.1 1504.2 L711.6 1504.1 L719.1 1504.0 L726.6 1503.9 L734.1 1503.7 L741.6 1503.5 L749.1 1503.4 L756.6 1503.2 L764.1 1502.9 L771.6 1502.7 L779.1 1502.4 L786.6 1502.1 L794.1 1501.8 L801.6 1501.4 L809.1 1501.0 L816.6 1500.6 L824.1 1500.2 L831.6 1499.7 L839.1 1499.1 L846.7 1498.5 L854.2 1497.9 L861.7 1497.2 L869.2 1496.5 L876.7 1495.6 L884.2 1494.8 L891.7 1493.8 L899.2 1492.8 L906.7 1491.8 L914.2 1490.6 L921.7 1489.3 L929.2 1488.0 L936.7 1486.6 L944.2 1485.1 L951.7 1483.4 L959.2 1481.7 L966.7 1479.9 L974.2 1477.9 L981.7 1475.9 L989.2 1473.7 L996.7 1471.4 L1004.2 1468.9 L1011.7 1466.3 L1019.2 1463.6 L1026.7 1460.7 L1034.2 1457.7 L1041.7 1454.6 L1049.2 1451.2 L1056.7 1447.8 L1064.2 1444.2 L1071.8 1440.4 L1079.3 1436.4 L1086.8 1432.3 L1094.3 1428.1 L1101.8 1423.6 L1109.3 1419.0 L1116.8 1414.3 L1124.3 1409.4 L1131.8 1404.3 L1139.3 1399.1 L1146.8 1393.7 L1154.3 1388.2 L1161.8 1382.6 L1169.3 1376.8 L1176.8 1370.9 L1184.3 1364.9 L1191.8 1358.7 L1199.3 1352.5 L1206.8 1346.1 L1214.3 1339.7 L1221.8 1333.2 L1229.3 1326.7 L1236.8 1320.1 L1244.3 1313.4 L1251.8 1306.8 L1259.3 1300.1 L1266.8 1293.4 L1274.3 1286.8 L1281.8 1280.1 L1289.3 1273.6 L1296.8 1267.1 L1304.4 1260.7 L1311.9 1254.3 L1319.4 1248.1 L1326.9 1242.1 L1334.4 1236.1 L1341.9 1230.4 L1349.4 1224.8 L1356.9 1219.4 L1364.4 1214.2 L1371.9 1209.3 L1379.4 1204.6 L1386.9 1200.1 L1394.4 1195.9 L1401.9 1192.0 L1409.4 1188.4 L1416.9 1185.1 L1424.4 1182.1 L1431.9 1179.5 L1439.4 1177.1 L1446.9 1175.2 L1454.4 1173.5 L1461.9 1172.2 L1469.4 1171.3 L1476.9 1170.7 L1484.4 1170.5 L1491.9 1170.6 L1499.4 1171.2 L1506.9 1172.0 L1514.4 1173.3 L1521.9 1174.8 L1529.5 1176.8 L1537.0 1179.0 L1544.5 1181.6 L1552.0 1184.6 L1559.5 1187.8 L1567.0 1191.4 L1574.5 1195.2 L1582.0 1199.4 L1589.5 1203.8 L1597.0 1208.4 L1604.5 1213.3 L1612.0 1218.5 L1619.5 1223.8 L1627.0 1229.4 L1634.5 1235.1 L1642.0 1241.0 L1649.5 1247.1 L1657.0 1253.2 L1664.5 1259.5 L1672.0 1265.9 L1679.5 1272.4 L1687.0 1279.0 L1694.5 1285.6 L1702.0 1292.2 L1709.5 1298.9 L1717.0 1305.6 L1724.5 1312.3 L1732.0 1318.9 L1739.5 1325.5 L1747.0 1332.1 L1754.6 1338.6 L1762.1 1345.0 L1769.6 1351.4 L1777.1 1357.6 L1784.6 1363.8 L1792.1 1369.9 L1799.6 1375.8 L1807.1 1381.6 L1814.6 1387.3 L1822.1 1392.8 L1829.6 1398.2 L1837.1 1403.4 L1844.6 1408.5 L1852.1 1413.4 L1859.6 1418.2 L1867.1 1422.8 L1874.6 1427.3 L1882.1 1431.6 L1889.6 1435.7 L1897.1 1439.7 L1904.6 1443.5 L1912.1 1447.2 L1919.6 1450.7 L1927.1 1454.0 L1934.6 1457.2 L1942.1 1460.2 L1949.6 1463.1 L1957.1 1465.9 L1964.6 1468.5 L1972.1 1470.9 L1979.7 1473.3 L1987.2 1475.5 L1994.7 1477.6 L2002.2 1479.6 L2009.7 1481.4 L2017.2 1483.2 L2024.7 1484.8 L2032.2 1486.3 L2039.7 1487.8 L2047.2 1489.1 L2054.7 1490.4 L2062.2 1491.6 L2069.7 1492.6 L2077.2 1493.7 L2084.7 1494.6 L2092.2 1495.5 L2099.7 1496.3 L2107.2 1497.1 L2114.7 1497.8 L2122.2 1498.4 L2129.7 1499.0 L2137.2 1499.6 L2144.7 1500.1 L2152.2 1500.5 L2159.7 1501.0 L2167.2 1501.4 L2174.7 1501.7 L2182.2 1502.1 L2189.7 1502.4 L2197.3 1502.6 L2204.8 1502.9 L2212.3 1503.1 L2219.8 1503.3 L2227.3 1503.5 L2234.8 1503.7 L2242.3 1503.8 L2249.8 1504.0 L2257.3 1504.1 L2264.8 1504.2 L2272.3 1504.3 L2279.8 1504.4 L2287.3 1504.5 L2294.8 1504.6 L2302.3 1504.7 L2309.8 1504.7 L2317.3 1504.8 L2324.8 1504.8 L2332.3 1504.9 L2339.8 1504.9 L2347.3 1504.9 L2354.8 1505.0 L2362.3 1505.0 L2369.8 1505.0 L2377.3 1505.0 L2384.8 1505.1 L2392.3 1505.1 L2399.8 1505.1 L2407.3 1505.1 L2414.8 1505.1 L2422.4 1505.1 L2429.9 1505.1 L2437.4 1505.1 L2444.9 1505.2 L2452.4 1505.2 L2459.9 1505.2 L2467.4 1505.2 L2474.9 1505.2 L2482.4 1505.2 L2489.9 1505.2 L2497.4 1505.2 L2504.9 1505.2 L2512.4 1505.2 L2519.9 1505.2 L2527.4 1505.2 L2534.9 1505.2 L2542.4 1505.2 L2549.9 1505.2 L2557.4 1505.2 L2564.9 1505.2 L2572.4 1505.2 L2579.9 1505.2 L2587.4 1505.2 L2594.9 1505.2 L2602.4 1505.2 L2609.9 1505.2 L2617.4 1505.2 L2624.9 1505.2 L2632.4 1505.2 L2639.9 1505.2 L2647.5 1505.2 L2655.0 1505.2 L2662.5 1505.2 L2670.0 1505.2 L2677.5 1505.2 L2685.0 1505.2 L2692.5 1505.2 L2700.0 1505.2 L2707.5 1505.2 L2715.0 1505.2 L2722.5 1505.2 L2730.0 1505.2 L2737.5 1505.2 L2745.0 1505.2 L2752.5 1505.2 L2760.0 1505.2" fill="none" stroke="#596adb" stroke-width="3.2" stroke-linejoin="round"/><text transform="translate(518.0 1543.0) rotate(-30)" text-anchor="end" font-size="21.6" fill="#666" x="0" y="0">0.45434</text><text transform="translate(593.0 1543.0) rotate(-30)" text-anchor="end" font-size="21.6" fill="#666" x="0" y="0">0.46056</text><text transform="translate(668.1 1543.0) rotate(-30)" text-anchor="end" font-size="21.6" fill="#666" x="0" y="0">0.46677</text><text transform="translate(743.1 1543.0) rotate(-30)" text-anchor="end" font-size="21.6" fill="#666" x="0" y="0">0.47299</text><text transform="translate(818.1 1543.0) rotate(-30)" text-anchor="end" font-size="21.6" fill="#666" x="0" y="0">0.47921</text><text transform="translate(893.2 1543.0) rotate(-30)" text-anchor="end" font-size="21.6" fill="#666" x="0" y="0">0.48543</text><text transform="translate(968.2 1543.0) rotate(-30)" text-anchor="end" font-size="21.6" fill="#666" x="0" y="0">0.49165</text><text transform="translate(1043.2 1543.0) rotate(-30)" text-anchor="end" font-size="21.6" fill="#666" x="0" y="0">0.49787</text><text transform="translate(1118.3 1543.0) rotate(-30)" text-anchor="end" font-size="21.6" fill="#666" x="0" y="0">0.50409</text><text transform="translate(1193.3 1543.0) rotate(-30)" text-anchor="end" font-size="21.6" fill="#666" x="0" y="0">0.51031</text><text transform="translate(1268.3 1543.0) rotate(-30)" text-anchor="end" font-size="21.6" fill="#666" x="0" y="0">0.51653</text><text transform="translate(1343.4 1543.0) rotate(-30)" text-anchor="end" font-size="21.6" fill="#666" x="0" y="0">0.52275</text><text transform="translate(1418.4 1543.0) rotate(-30)" text-anchor="end" font-size="21.6" fill="#666" x="0" y="0">0.52897</text><text transform="translate(1493.4 1543.0) rotate(-30)" text-anchor="end" font-size="21.6" fill="#666" x="0" y="0">0.53519</text><text transform="translate(1568.5 1543.0) rotate(-30)" text-anchor="end" font-size="21.6" fill="#666" x="0" y="0">0.54141</text><text transform="translate(1643.5 1543.0) rotate(-30)" text-anchor="end" font-size="21.6" fill="#666" x="0" y="0">0.54763</text><text transform="translate(1718.5 1543.0) rotate(-30)" text-anchor="end" font-size="21.6" fill="#666" x="0" y="0">0.55385</text><text transform="translate(1793.6 1543.0) rotate(-30)" text-anchor="end" font-size="21.6" fill="#666" x="0" y="0">0.56007</text><text transform="translate(1868.6 1543.0) rotate(-30)" text-anchor="end" font-size="21.6" fill="#666" x="0" y="0">0.56629</text><text transform="translate(1943.6 1543.0) rotate(-30)" text-anchor="end" font-size="21.6" fill="#666" x="0" y="0">0.57251</text><text transform="translate(2018.7 1543.0) rotate(-30)" text-anchor="end" font-size="21.6" fill="#666" x="0" y="0">0.57873</text><text transform="translate(2093.7 1543.0) rotate(-30)" text-anchor="end" font-size="21.6" fill="#666" x="0" y="0">0.58495</text><text transform="translate(2168.7 1543.0) rotate(-30)" text-anchor="end" font-size="21.6" fill="#666" x="0" y="0">0.59117</text><text transform="translate(2243.8 1543.0) rotate(-30)" text-anchor="end" font-size="21.6" fill="#666" x="0" y="0">0.59739</text><text transform="translate(2318.8 1543.0) rotate(-30)" text-anchor="end" font-size="21.6" fill="#666" x="0" y="0">0.60361</text><text transform="translate(2393.8 1543.0) rotate(-30)" text-anchor="end" font-size="21.6" fill="#666" x="0" y="0">0.60983</text><text transform="translate(2468.9 1543.0) rotate(-30)" text-anchor="end" font-size="21.6" fill="#666" x="0" y="0">0.61605</text><text transform="translate(2543.9 1543.0) rotate(-30)" text-anchor="end" font-size="21.6" fill="#666" x="0" y="0">0.62227</text><text transform="translate(2618.9 1543.0) rotate(-30)" text-anchor="end" font-size="21.6" fill="#666" x="0" y="0">0.62849</text><text transform="translate(2694.0 1543.0) rotate(-30)" text-anchor="end" font-size="21.6" fill="#666" x="0" y="0">0.63471</text><text transform="translate(2769.0 1543.0) rotate(-30)" text-anchor="end" font-size="21.6" fill="#666" x="0" y="0">0.64093</text></svg>
<div class="b" style="left:1432px;top:1610px;width:20px;height:20px;background:#596adb;border-radius:5px;"></div>
<div class="t " style="left:1462px;top:1604px;line-height:32px;font-size:21.6px;color:#151515;">Hide（隐藏）</div>
<div class="b" style="left:1610px;top:1610px;width:20px;height:20px;background:#f19f3c;border-radius:5px;"></div>
<div class="t " style="left:1639.5px;top:1604px;line-height:32px;font-size:21.6px;color:#151515;">Show（展示）</div>
<div class="b" style="left:2829px;top:896px;width:41px;height:126px;background:#fff;border-radius:13px;box-shadow:0 2px 10px rgba(60,70,120,0.08);"></div>
<svg class="b" style="left:2835px;top:946px;" width="16" height="24" viewBox="0 0 16 24"><path d="M12 5.6 L5.4 12.2 L12 18.8" fill="none" stroke="#4f60d8" stroke-width="2"/></svg>
</body></html>
